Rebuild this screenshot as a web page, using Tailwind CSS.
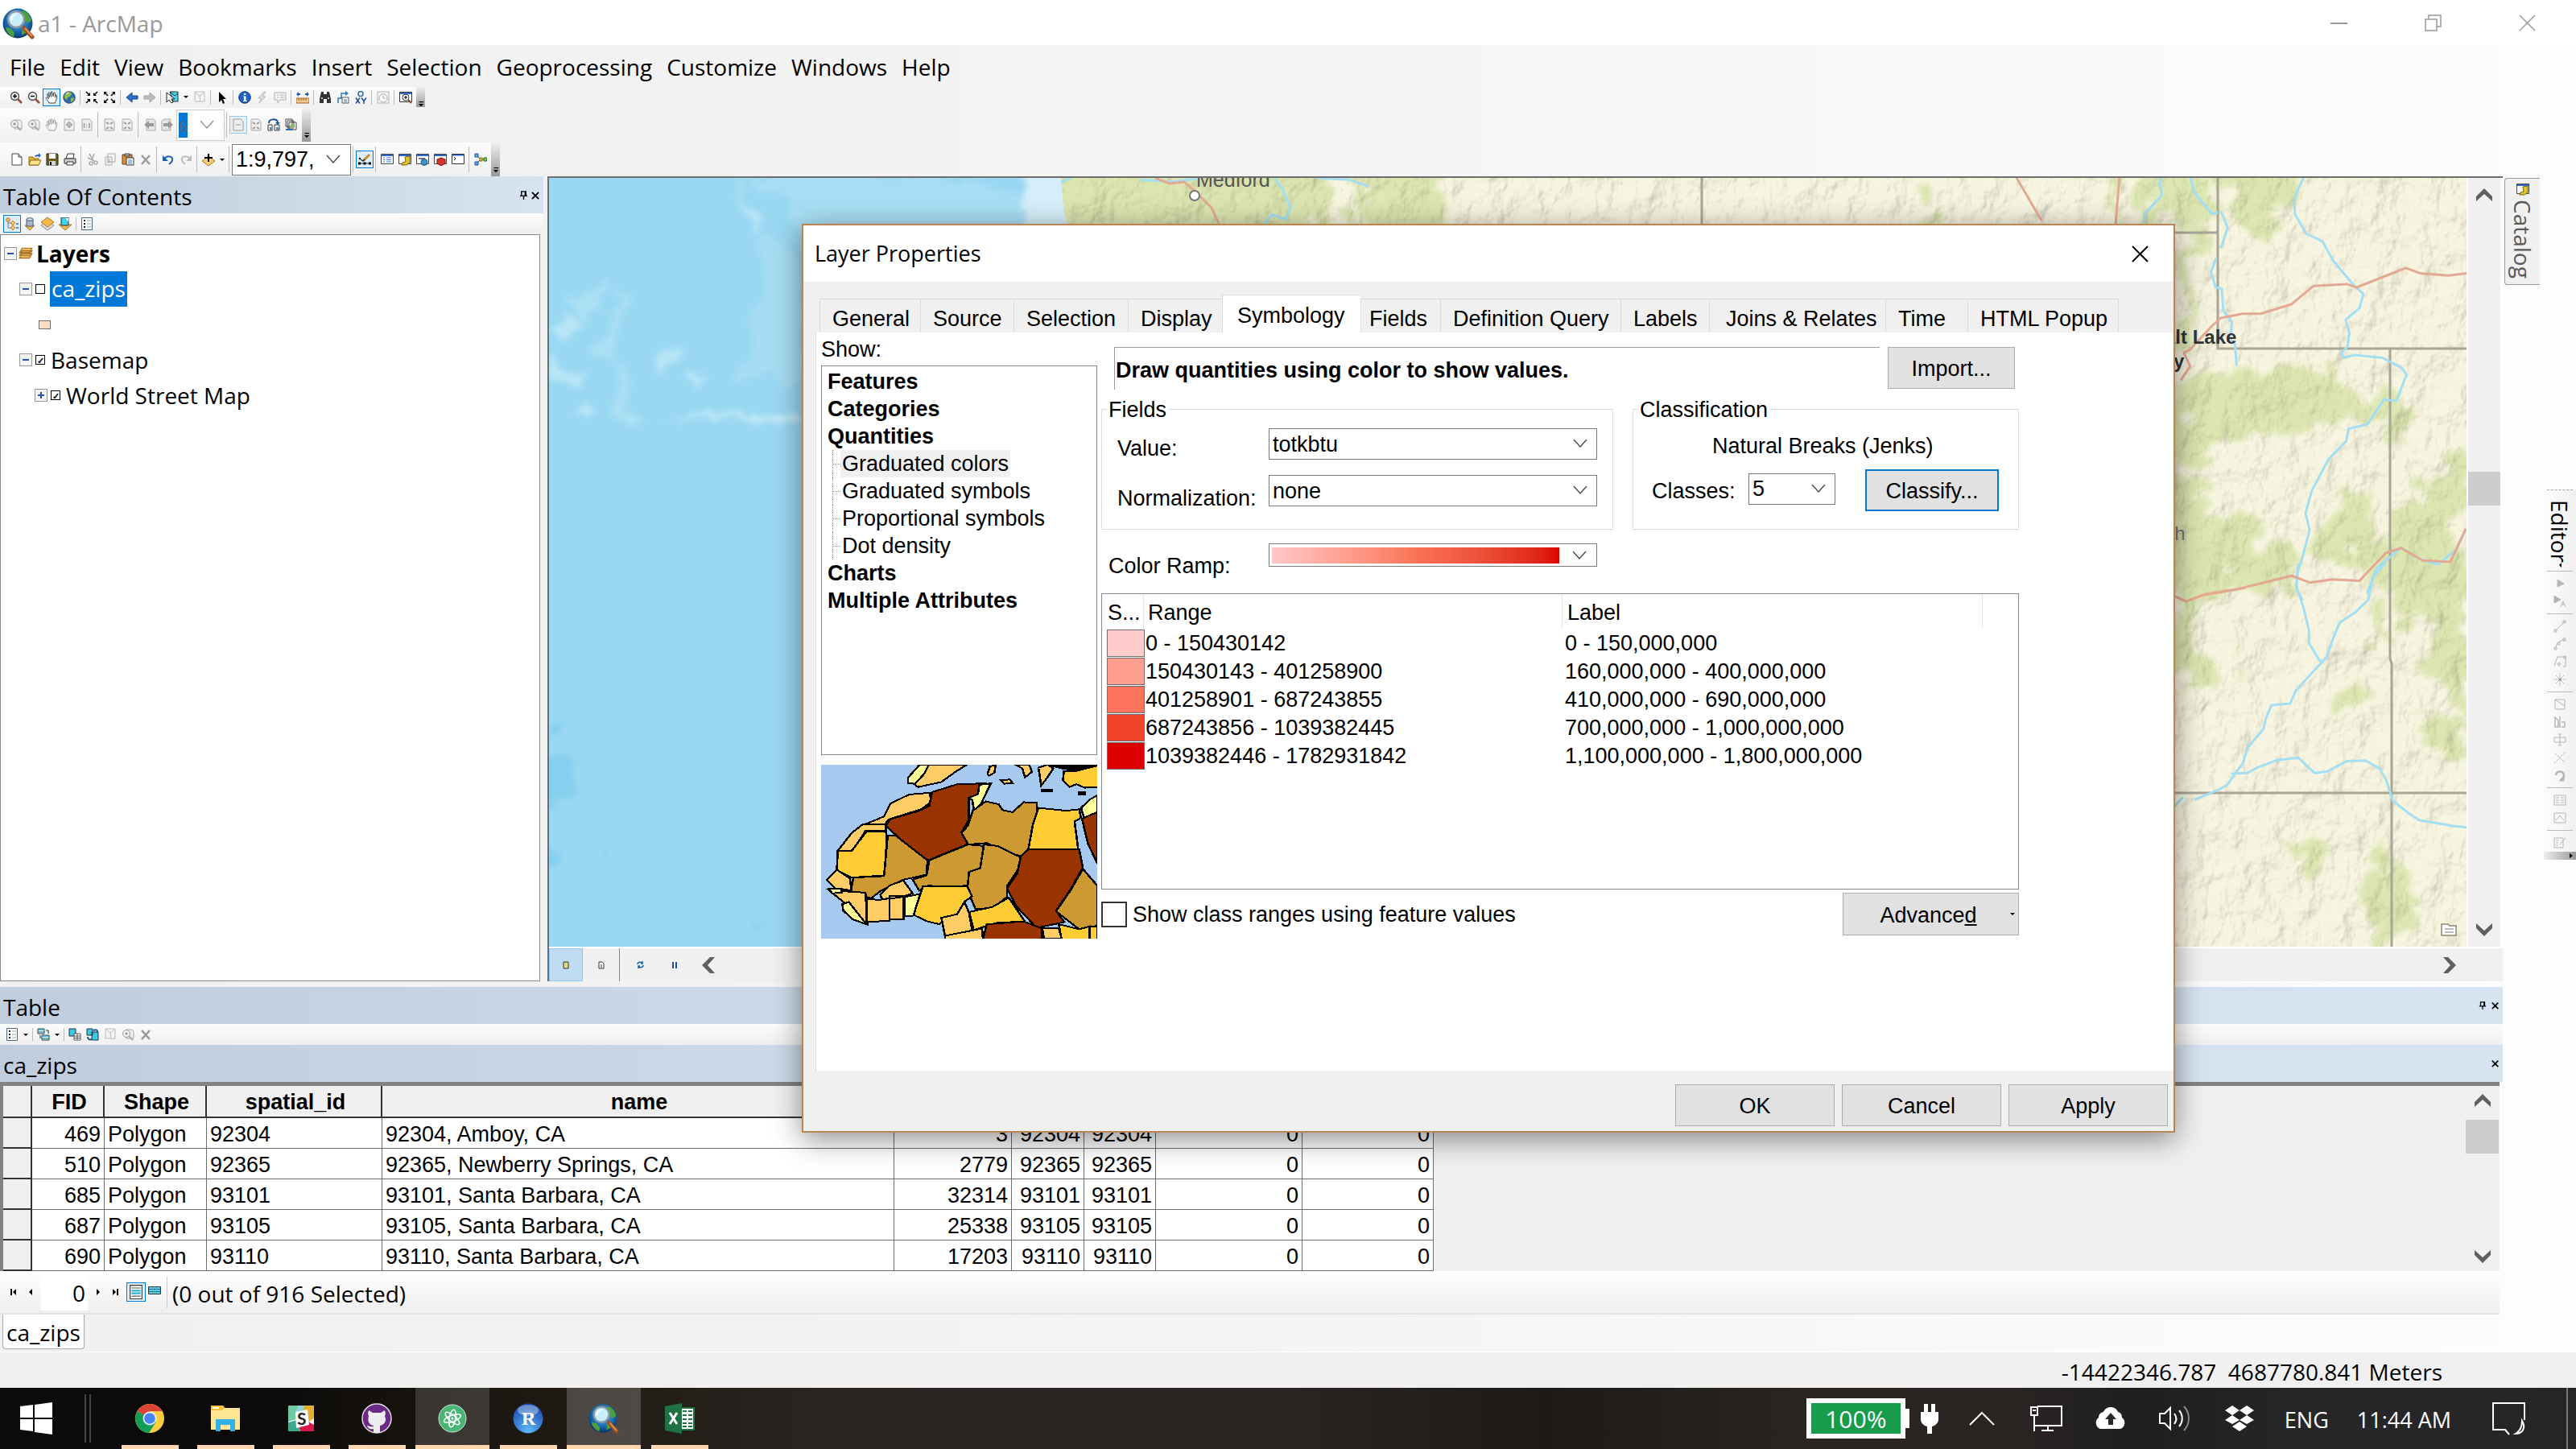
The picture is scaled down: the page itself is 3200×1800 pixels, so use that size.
<!DOCTYPE html>
<html lang="en">
<head>
<meta charset="utf-8">
<title>a1 - ArcMap</title>
<script src="https://cdn.jsdelivr.net/npm/@tailwindcss/browser@4"></script>
</head>
<body class="bg-[#f0f0f0] font-['Open_Sans','Noto_Sans',sans-serif] text-[28px] leading-9 text-black">

<!-- icon library -->
<svg class="absolute size-0" aria-hidden="true">
  <radialGradient id="gl" cx=".5" cy=".4" r=".6"><stop offset="0" stop-color="#5fc4ee"/><stop offset=".6" stop-color="#1c6fb5"/><stop offset="1" stop-color="#0b3468"/></radialGradient>
  <symbol id="app" viewBox="0 0 40 40"><circle cx="19" cy="20" r="18.500" fill="url(#gl)"/><path d="M25 4c6 2 10 7 11 13l-5 3-4-6-4-3zM4 25l6 1 5 6-1 5C9 35 5 31 4 25zM24 27l7-2-2 7-5 3z" fill="#4ba23a"/><circle cx="17" cy="15" r="10" fill="#c9eefb" stroke="#8b98a3" stroke-width="2.500"/><path d="M10 15c1-5 5-7 9-6-5 1-7 4-7 8z" fill="#fff"/><path d="M24 23l3 3" stroke="#777" stroke-width="4"/><path d="M27 26l10 11" stroke="#a04f1c" stroke-width="5" stroke-linecap="round"/><path d="M28 26l9 10" stroke="#e2935a" stroke-width="2"/></symbol>
  <symbol id="zin" viewBox="0 0 16 16"><circle cx="6.500" cy="6.500" r="5" fill="#eef3f7" stroke="#444" stroke-width="1.300"/><path d="M4 6.500h5M6.500 4v5" stroke="#000" stroke-width="1.500"/><path d="M10 10l5 5" stroke="#8f4b39" stroke-width="2.500"/></symbol>
  <symbol id="zout" viewBox="0 0 16 16"><circle cx="6.500" cy="6.500" r="5" fill="#eef3f7" stroke="#444" stroke-width="1.300"/><path d="M4 6.500h5" stroke="#000" stroke-width="1.500"/><path d="M10 10l5 5" stroke="#8f4b39" stroke-width="2.500"/></symbol>
  <symbol id="hand" viewBox="0 0 16 16"><path d="M5 15C4 12 1 10 1 8.500 2 7 4 9 4.500 10L2.500 4c1-1 2 0 3 4L4.500 2c1-1 2 0 3 5.500L7.500 1c1-1 2 0 2.300 6L11 2c1-.5 2 0 1.500 6l1-3c1 0 1.500 0 1 3-.5 4-2 5-2 7z" fill="#fff" stroke="#444"/></symbol>
  <symbol id="globe" viewBox="0 0 16 16"><circle cx="8" cy="8" r="7.300" fill="#2c6cb4" stroke="#1c3d66" stroke-width=".8"/><path d="M5 2l4-1 2 3-2 3-3 1-1 3-3-2 0-3zM10 9l4-1-1 4-3 2z" fill="#8cbc4c"/><path d="M4 4l3-2" stroke="#e8f2c8" stroke-width="1.500"/></symbol>
  <symbol id="in4" viewBox="0 0 16 16"><path d="M1 1l4 4M15 1l-4 4M1 15l4-4M15 15l-4-4" stroke="#000" stroke-width="1.500"/><path d="M6 2v4H2zM10 2v4h4zM6 14v-4H2zM10 14v-4h4z"/></symbol>
  <symbol id="out4" viewBox="0 0 16 16"><path d="M2 2l4 4M14 2l-4 4M2 14l4-4M14 14l-4-4" stroke="#000" stroke-width="1.500"/><path d="M1 5V1h4zM15 5V1h-4zM1 11v4h4zM15 11v4h-4z"/></symbol>
  <symbol id="back" viewBox="0 0 16 16"><path d="M1 8l7-6v4h7v4H8v4z" fill="#2f6fd0" stroke="#173f8a"/></symbol>
  <symbol id="fwd" viewBox="0 0 16 16"><path d="M15 8L8 2v4H1v4h7v4z" fill="#bdbdbd" stroke="#a5a5a5"/></symbol>
  <symbol id="self" viewBox="0 0 16 16"><path d="M5 1h10v12H9z" fill="#45d7ee" stroke="#333"/><path d="M5 1l6 5 4-3" stroke="#333" fill="none"/><path d="M1 2v12l3-3 3 4 2-1-2-4h4z" fill="#fff" stroke="#222"/></symbol>
  <symbol id="clr" viewBox="0 0 16 16"><path d="M2 1h12v12H2zM2 1l6 5 5-4M8 6l1 7" fill="#f4f4f4" stroke="#bbb"/></symbol>
  <symbol id="ptr" viewBox="0 0 16 16"><path d="M4 1v13l3-3 2 5 2-1-2-5h4z"/></symbol>
  <symbol id="info" viewBox="0 0 16 16"><circle cx="8" cy="8" r="7.300" fill="#1f62c4" stroke="#12397c"/><path d="M7 3h2.500v2H7zM6 6.500h3.500V12H11v1H6v-1h1V7.500H6z" fill="#fff"/></symbol>
  <symbol id="bolt" viewBox="0 0 16 16"><path d="M10 1L3 9h4l-3 6 8-8H8l4-6z" fill="#e3e3e3" stroke="#b5b5b5"/></symbol>
  <symbol id="pop" viewBox="0 0 16 16"><path d="M1 2h14v9H8l-3 4v-4H1zM4 5h2M4 8h2M8 5h5M8 8h5" fill="#f3f3f3" stroke="#b0b0b0"/></symbol>
  <symbol id="rule" viewBox="0 0 16 16"><path d="M0 4l3-3v2h2v2H3v2zM16 4l-3-3v2h-2v2h2v2z" fill="#2459b0"/><path d="M0 9h16v6H0z" fill="#f3c98b" stroke="#9b6a2b"/><path d="M3 9v3M6 9v3M9 9v3M12 9v3" stroke="#9b6a2b"/></symbol>
  <symbol id="bino" viewBox="0 0 16 16"><path d="M3 1h3v3h4V1h3l2 9v5h-5v-5H6v5H1v-5z" fill="#333"/><path d="M3 9h2M11 9h2" stroke="#bbb" stroke-width="2"/></symbol>
  <symbol id="route" viewBox="0 0 16 16"><path d="M2 15V9h4V3h5" fill="none" stroke="#2e78b5" stroke-width="1.500"/><path d="M11 0l4 3-4 3z" fill="#2e78b5"/><path d="M7 8h8v7H7z" fill="#fff" stroke="#555"/><path d="M9 11h4M9 13h4" stroke="#2e78b5"/></symbol>
  <symbol id="xy" viewBox="0 0 16 16"><circle cx="8" cy="3.500" r="3" fill="#fff" stroke="#2768a8" stroke-width="1.500"/><path d="M2 8.500l5 7M7 8.500l-5 7M9 8.500l3 4 3-4M12 12v4" stroke="#1c4f9a" stroke-width="1.500" fill="none"/></symbol>
  <symbol id="time" viewBox="0 0 16 16"><path d="M1 1h14v14H1z" fill="#f2f2f2" stroke="#b5b5b5"/><circle cx="8" cy="9" r="5" fill="#fafafa" stroke="#b0b0b0"/><path d="M8 6v3h3" fill="none" stroke="#aaa"/></symbol>
  <symbol id="view" viewBox="0 0 16 16"><path d="M.5 1.500h15v12H.5z" fill="#fff" stroke="#333"/><path d="M1 2h14v2H1z" fill="#3a6fd0"/><circle cx="8" cy="8" r="4" fill="#fff" stroke="#333"/><path d="M6 8h4M8 6v4" stroke="#000"/><path d="M11 11l4 4" stroke="#8f4b39" stroke-width="2"/></symbol>
  <symbol id="lz" viewBox="0 0 16 16"><path d="M6 2h7l2 2v9H6z" fill="#eee" stroke="#aaa"/><circle cx="6" cy="7" r="4.500" fill="#f2f2f2" stroke="#999"/><path d="M4 7h4M6 5v4" stroke="#888"/><path d="M9 10l5 5" stroke="#aaa" stroke-width="2"/></symbol>
  <symbol id="lp" viewBox="0 0 16 16"><path d="M2 1h9l3 3v11H2z" fill="#eee" stroke="#aaa"/><path d="M5 8h6M8 5v6M4 8l2-2v4zM12 8l-2-2v4zM8 4L6 6h4zM8 12l-2-2h4z" fill="#aaa" stroke="#aaa"/></symbol>
  <symbol id="l1" viewBox="0 0 16 16"><path d="M2 1h9l3 3v11H2z" fill="#eee" stroke="#aaa"/><path d="M4.500 6v6M11 6v6M7.500 7.500v1M7.500 10.500v1" stroke="#999" stroke-width="1.500"/></symbol>
  <symbol id="l4" viewBox="0 0 16 16"><path d="M2 1h9l3 3v11H2z" fill="#eee" stroke="#aaa"/><path d="M4 5l3 2M12 5l-3 2M4 13l3-2M12 13l-3-2" stroke="#999" stroke-width="2"/></symbol>
  <symbol id="la" viewBox="0 0 16 16"><path d="M4 1h8l3 2v12H4z" fill="#e6e6e6" stroke="#aaa"/><path d="M1 8l6-5v3h6v4H7v3z" fill="#999"/></symbol>
  <symbol id="ld" viewBox="0 0 16 16"><path d="M2 1h9l3 3v11H2z" fill="#eee" stroke="#999"/><path d="M5 8h6" stroke="#999"/></symbol>
  <symbol id="swap" viewBox="0 0 16 16"><path d="M2 6c0-6 10-6 11-1" fill="none" stroke="#1d4f91" stroke-width="2"/><path d="M10 5h6l-3 3z" fill="#1d4f91"/><path d="M1 8h5v7H1zM9 8h6v7H9z" fill="#fff" stroke="#333"/><path d="M3 11h2v3H3zM11 11h3v3h-3z" fill="#4a86c8"/></symbol>
  <symbol id="pages" viewBox="0 0 16 16"><path d="M1 1h8v9H1zM3 3h8v9H3zM5 5h9v9H5z" fill="#fff" stroke="#444"/><path d="M7 7h5v5H7z" fill="#7fc35a"/><path d="M1 14h9" stroke="#2c70c0" stroke-width="2"/></symbol>
  <symbol id="new" viewBox="0 0 16 16"><path d="M2 1h8l4 4v10H2z" fill="#fff" stroke="#444"/><path d="M10 1v4h4" fill="#bdd2ee" stroke="#444"/></symbol>
  <symbol id="open" viewBox="0 0 16 16"><path d="M1 5h5l1 2h6v8H1z" fill="#e3b52f" stroke="#8d6a12"/><path d="M3 9h13l-3 6H1z" fill="#ffe48a" stroke="#8d6a12"/><path d="M8 5c1-3 3-3 5-3V0l3 3-3 3V4" fill="#2c64b8"/></symbol>
  <symbol id="save" viewBox="0 0 16 16"><path d="M1 1h13l1 1v13H1z" fill="#6a6021" stroke="#26230c"/><path d="M4 1h8v6H4z" fill="#fff"/><path d="M4 10h8v5H4z" fill="#d5d5d5"/><path d="M5 11h2v4H5z"/></symbol>
  <symbol id="print" viewBox="0 0 16 16"><path d="M5 1h8l-1 6H3z" fill="#fff" stroke="#333"/><path d="M1 7h14v6H1z" fill="#c9ccd2" stroke="#333"/><path d="M4 11h8v4H4z" fill="#fff" stroke="#333"/></symbol>
  <symbol id="cut" viewBox="0 0 16 16"><path d="M4 1l6 10M8 9L2 6M10 1L7 9" stroke="#aaa" stroke-width="1.500"/><circle cx="12" cy="12" r="2" fill="none" stroke="#aaa" stroke-width="1.500"/><circle cx="6" cy="13" r="2" fill="none" stroke="#aaa" stroke-width="1.500"/></symbol>
  <symbol id="copy" viewBox="0 0 16 16"><path d="M5 1h9v10H5zM2 5h8v10H2zM4 8h4M4 10h4M4 12h4" fill="#f6f6f6" stroke="#aaa"/></symbol>
  <symbol id="paste" viewBox="0 0 16 16"><path d="M1 2h12v12H1z" fill="#d89038" stroke="#6d4312"/><path d="M4 1h6v3H4z" fill="#aaa" stroke="#444"/><path d="M6 6h9v9H6z" fill="#fff" stroke="#333"/><path d="M8 9h5M8 11h5M8 13h5" stroke="#4a78b8"/></symbol>
  <symbol id="del" viewBox="0 0 16 16"><path d="M3 3l10 11M13 3L3 14" stroke="#999" stroke-width="2.500"/></symbol>
  <symbol id="undo" viewBox="0 0 16 16"><path d="M3 7c5-5 11-2 10 2-.5 3-3 4-4 5" fill="none" stroke="#1d5fa8" stroke-width="2"/><path d="M1 3v7h7z" fill="#1d5fa8"/></symbol>
  <symbol id="redo" viewBox="0 0 16 16"><path d="M13 7C8 2 2 5 3 9c.5 3 3 4 4 5" fill="none" stroke="#bbb" stroke-width="2"/><path d="M15 3v7H8z" fill="#bbb"/></symbol>
  <symbol id="add" viewBox="0 0 16 16"><path d="M8 4l8 6-8 6-8-6z" fill="#f5cf6c" stroke="#a8792a"/><path d="M8 1v10M3 6h10" stroke="#000" stroke-width="2"/></symbol>
  <symbol id="edit" viewBox="0 0 16 16"><path d="M1 13h14" stroke="#222"/><path d="M0 11.500h3v3H0zM6.500 11.500h3v3h-3zM13 11.500h3v3h-3zM1 6h2v2H1z"/><path d="M7 9l7-7" fill="none" stroke="#c98e2a" stroke-width="3"/><path d="M3 8l3 2 2-2" fill="none" stroke="#222" stroke-width="1.500"/></symbol>
  <symbol id="wtoc" viewBox="0 0 16 16"><path d="M.5 1.500h15v12H.5z" fill="#fff" stroke="#444"/><path d="M1 2h14v2H1z" fill="#2f68cc"/><path d="M3 6h2M3 8.500h2M3 11h2M7 6h6M7 8.500h6M7 11h6" stroke="#3a76c8"/></symbol>
  <symbol id="wcat" viewBox="0 0 16 16"><path d="M.5 1.500h15v12H.5z" fill="#fff" stroke="#444"/><path d="M1 2h14v2H1z" fill="#2f68cc"/><path d="M8 5l6-1v8l-4 3H4l1-3 4-1z" fill="#e2c526" stroke="#75640c"/></symbol>
  <symbol id="wsrch" viewBox="0 0 16 16"><path d="M.5 1.500h15v12H.5z" fill="#fff" stroke="#444"/><path d="M1 2h14v2H1z" fill="#2f68cc"/><path d="M3 7h8" stroke="#777" stroke-width="2"/><circle cx="10" cy="11.500" r="4" fill="#3b94c8" stroke="#23577d"/></symbol>
  <symbol id="wtool" viewBox="0 0 16 16"><path d="M.5 1.500h15v12H.5z" fill="#fff" stroke="#444"/><path d="M1 2h14v2H1z" fill="#2f68cc"/><path d="M4 8l5-2 5 2v5l-5 3-5-3z" fill="#d6342a" stroke="#7c130e"/></symbol>
  <symbol id="wpy" viewBox="0 0 16 16"><path d="M.5 1.500h15v12H.5z" fill="#fff" stroke="#333"/><path d="M1 2h14v1.500H1z" fill="#2f68cc"/><path d="M3 5l2 2-2 2" fill="none" stroke="#000"/></symbol>
  <symbol id="model" viewBox="0 0 16 16"><path d="M3 3l5 5h5M3 13l5-5" fill="none" stroke="#444"/><path d="M1 1h4v4H1zM1 11h4v4H1z" fill="#5fa8e8" stroke="#1c4f9a"/><path d="M7 6h3v4H7z" fill="#f2cf3d" stroke="#7a6410"/><path d="M12 6h4v4h-4z" fill="#7fc35a" stroke="#2f6a1a"/></symbol>
  <symbol id="tord" viewBox="0 0 16 16"><path d="M3 5v8h5M3 7h4" fill="none" stroke="#777"/><circle cx="3" cy="3" r="2.300" fill="#f1c15c" stroke="#a8792a"/><path d="M9 4l3 3-3 3-3-3zM9 10l3 3-3 3-3-3z" fill="#f1c15c" stroke="#a8792a" stroke-width=".8"/><path d="M13 8h3M13 13h3" stroke="#2f68cc" stroke-width="1.500"/></symbol>
  <symbol id="tsrc" viewBox="0 0 16 16"><path d="M2 10h12l-6 6z" fill="#f1b84e" stroke="#a8792a"/><path d="M4 2h8v9H4z" fill="#a9b8d2" stroke="#4c5a78"/><ellipse cx="8" cy="2.500" rx="4" ry="1.800" fill="#dde5f2" stroke="#4c5a78"/></symbol>
  <symbol id="tvis" viewBox="0 0 16 16"><path d="M8 4l8 6-8 6-8-6z" fill="#ddd" stroke="#888"/><path d="M8 0l8 6-8 6-8-6z" fill="#f1b84e" stroke="#a8792a"/></symbol>
  <symbol id="tsel" viewBox="0 0 16 16"><path d="M0 9h16l-8 7z" fill="#f1b84e" stroke="#a8792a"/><path d="M3 0h9v10H3z" fill="#3fd2ec" stroke="#333"/><path d="M8 1h4v4z" fill="#fff"/></symbol>
  <symbol id="opts" viewBox="0 0 16 16"><path d="M1.500.5h13v15h-13z" fill="#fff" stroke="#4c6484"/><path d="M4 4h2M4 8h2M4 12h2" stroke="#222" stroke-width="2"/><path d="M8 4h5M8 8h5M8 12h5" stroke="#8aa"/></symbol>
  <symbol id="rel" viewBox="0 0 16 16"><path d="M1 1h8v6H1zM6 9h9v6H6z" fill="#fff" stroke="#333"/><path d="M1 2h8M1 5h8M6 10h9M6 13h9" stroke="#2a9db8" stroke-width="1.500"/><path d="M11 3h3v4M4 9v4" fill="none" stroke="#222"/></symbol>
  <symbol id="tse1" viewBox="0 0 16 16"><path d="M1 1h8v9H1z" fill="#35cbe8" stroke="#333"/><path d="M7 7h8v8H7zM7 10h8M7 12.500h8M11 7v8" fill="#fff" stroke="#555"/></symbol>
  <symbol id="tse2" viewBox="0 0 16 16"><path d="M1 1h7v8H1zM7 5h8v10H7z" fill="#35cbe8" stroke="#333"/><path d="M9 3c4-2 5 0 5 2M2 11c0 3 2 4 5 3" fill="none" stroke="#174f9a" stroke-width="2"/></symbol>
  <symbol id="all" viewBox="0 0 16 16"><path d="M1.500.5h13v15h-13z" fill="#fff" stroke="#333"/><path d="M3 3.500h10M3 12.500h10" stroke="#555"/><path d="M3 6.500h10M3 9.500h10" stroke="#2fb2cc" stroke-width="2"/></symbol>
  <symbol id="selr" viewBox="0 0 16 16"><path d="M.5 1.500h15v9H.5z" fill="#5cd0e4" stroke="#333"/><path d="M1 4.500h14M1 7.500h14" stroke="#256f82"/></symbol>
  <symbol id="pin" viewBox="0 0 12 12"><path d="M3 1h6v6H3zM8 1v6M1 7h10M6 7v5" fill="none" stroke="#000" stroke-width="1.500"/></symbol>
  <symbol id="x" viewBox="0 0 12 12"><path d="M1 2l9 9M10 2l-9 9" stroke="#000" stroke-width="2"/></symbol>
  <symbol id="chev" viewBox="0 0 18 12"><path d="M1 1l8 9 8-9" fill="none" stroke="#444" stroke-width="1.300"/></symbol>
  <symbol id="arr" viewBox="0 0 20 16"><path d="M0 10L10 0l10 10v6L10 7 0 16z" fill="#606060"/></symbol>
  <symbol id="cap" viewBox="0 0 10 10"><path d="M2 2h7" stroke="#000" stroke-width="1.500"/><path d="M1 5h8l-4 4z"/></symbol>
</svg>

<div class="flex min-h-screen w-full flex-col bg-linear-to-r from-[#f0f0f0] via-[#f4f4f4] to-[#fdfdfd]">

  <!-- title bar -->
  <header class="flex h-14 items-center bg-white pt-px pl-[3px] text-[#999]">
    <svg class="size-[40px]"><use href="#app"/></svg>
    <h1 class="ml-1 flex-1">a1 - ArcMap</h1>
    <div class="flex items-center pr-[50px]">
      <button aria-label="Minimize" class="mr-24"><svg class="h-5 w-[21px]" viewBox="0 0 21 20"><path d="M0 10h21" stroke="#999" stroke-width="2"/></svg></button>
      <button aria-label="Restore" class="mr-24"><svg class="size-[21px]" viewBox="0 0 21 21" fill="none" stroke="#999" stroke-width="1.500"><path d="M1 6h14v14H1zM5 6V1h15v14h-5"/></svg></button>
      <button aria-label="Close"><svg class="size-[21px]" viewBox="0 0 21 21" stroke="#999" stroke-width="1.500"><path d="M1 1l19 19M20 1L1 20"/></svg></button>
    </div>
  </header>

  <nav class="flex h-[52px] items-center gap-[18px] pt-px pl-3" aria-label="Menu">
    <button>File</button><button>Edit</button><button>View</button><button>Bookmarks</button><button>Insert</button><button>Selection</button><button>Geoprocessing</button><button>Customize</button><button>Windows</button><button>Help</button>
  </nav>

  <!-- toolbars -->
  <div class="flex h-[25px]">
    <div role="toolbar" aria-label="Tools" class="flex items-center bg-linear-to-b from-[#fcfcfc] to-[#f0f0f0] pl-[9px] [&_button]:flex [&_button]:h-[22px] [&_button]:w-[22px] [&_button]:items-center [&_button]:justify-center [&_svg]:size-4 [&>i]:mx-[2px] [&>i]:h-[18px] [&>i]:w-[2px] [&>i]:border-l [&>i]:border-[#bbb]">
      <button aria-label="Zoom In"><svg><use href="#zin"/></svg></button><button aria-label="Zoom Out"><svg><use href="#zout"/></svg></button><button aria-label="Pan" class="border border-[#0078d7] bg-[#ddeefa]"><svg><use href="#hand"/></svg></button><button aria-label="Full Extent"><svg><use href="#globe"/></svg></button><i></i>
      <button aria-label="Fixed Zoom In"><svg><use href="#in4"/></svg></button><button aria-label="Fixed Zoom Out"><svg><use href="#out4"/></svg></button><i></i>
      <button aria-label="Back"><svg><use href="#back"/></svg></button><button aria-label="Forward"><svg><use href="#fwd"/></svg></button><i></i>
      <button aria-label="Select Features"><svg><use href="#self"/></svg></button><b class="mx-[3px] border-x-3 border-t-3 border-x-transparent border-t-black"></b><button aria-label="Clear Selection"><svg><use href="#clr"/></svg></button><i></i>
      <button aria-label="Select Elements"><svg><use href="#ptr"/></svg></button><i></i>
      <button aria-label="Identify"><svg><use href="#info"/></svg></button><button aria-label="Hyperlink"><svg><use href="#bolt"/></svg></button><button aria-label="HTML Popup"><svg><use href="#pop"/></svg></button><i></i>
      <button aria-label="Measure"><svg><use href="#rule"/></svg></button><i></i>
      <button aria-label="Find"><svg><use href="#bino"/></svg></button><button aria-label="Find Route"><svg><use href="#route"/></svg></button><button aria-label="Go To XY"><svg><use href="#xy"/></svg></button><i></i>
      <button aria-label="Time Slider"><svg><use href="#time"/></svg></button><i></i>
      <button aria-label="Viewer Window"><svg><use href="#view"/></svg></button>
      <span class="ml-[2px] flex h-full w-[11px] items-end justify-center self-end bg-linear-to-b from-[#f0f0f0] to-[#999]"><svg class="size-2!"><use href="#cap"/></svg></span>
    </div>
  </div>
  <div class="flex h-11 py-px">
    <div role="toolbar" aria-label="Layout" class="flex items-center bg-linear-to-b from-[#fcfcfc] to-[#f0f0f0] pl-[9px] [&_button]:flex [&_button]:h-[22px] [&_button]:w-[22px] [&_button]:items-center [&_button]:justify-center [&_svg]:size-4 [&>i]:mx-[2px] [&>i]:h-8 [&>i]:w-[2px] [&>i]:border-l [&>i]:border-[#bbb]">
      <button aria-label="Zoom In Page"><svg><use href="#lz"/></svg></button><button aria-label="Zoom Out Page"><svg><use href="#lz"/></svg></button><button aria-label="Pan Page"><svg class="opacity-50"><use href="#hand"/></svg></button><button aria-label="Zoom Whole Page"><svg><use href="#lp"/></svg></button><button aria-label="Zoom to 100%"><svg><use href="#l1"/></svg></button><i></i>
      <button aria-label="Fixed Zoom In Page"><svg><use href="#l4"/></svg></button><button aria-label="Fixed Zoom Out Page"><svg><use href="#l4"/></svg></button><i></i>
      <button aria-label="Previous Extent"><svg><use href="#la"/></svg></button><button aria-label="Next Extent"><svg class="-scale-x-100"><use href="#la"/></svg></button>
      <span class="flex h-[39px] w-[60px] items-center justify-between border border-[#ccc] bg-white pr-3 pl-[2px]"><b class="h-[31px] w-[11px] bg-[#0078d7] text-[18px] leading-[34px] font-normal text-[#666]">6</b><svg class="h-3! w-[18px]! opacity-60"><use href="#chev"/></svg></span><i></i>
      <button aria-label="Draft Mode" class="border border-[#9ac7ea] bg-[#e6eef5]"><svg><use href="#ld"/></svg></button><button aria-label="Focus Data Frame"><svg><use href="#l4"/></svg></button><button aria-label="Change Layout"><svg><use href="#swap"/></svg></button><button aria-label="Data Driven Pages"><svg><use href="#pages"/></svg></button>
      <span class="ml-[2px] flex h-full w-[11px] items-end justify-center bg-linear-to-b from-[#f0f0f0] to-[#999] pb-1"><svg class="size-2!"><use href="#cap"/></svg></span>
    </div>
  </div>
  <div class="flex h-[42px]">
    <div role="toolbar" aria-label="Standard" class="flex items-center bg-linear-to-b from-[#fcfcfc] to-[#f0f0f0] pl-[10px] [&_button]:flex [&_button]:h-[22px] [&_button]:w-[22px] [&_button]:items-center [&_button]:justify-center [&_svg]:size-4 [&>i]:mx-[2px] [&>i]:h-8 [&>i]:w-[2px] [&>i]:border-l [&>i]:border-[#bbb]">
      <button aria-label="New"><svg><use href="#new"/></svg></button><button aria-label="Open"><svg><use href="#open"/></svg></button><button aria-label="Save"><svg><use href="#save"/></svg></button><button aria-label="Print"><svg><use href="#print"/></svg></button><i></i>
      <button aria-label="Cut"><svg><use href="#cut"/></svg></button><button aria-label="Copy"><svg><use href="#copy"/></svg></button><button aria-label="Paste"><svg><use href="#paste"/></svg></button><button aria-label="Delete"><svg><use href="#del"/></svg></button><i></i>
      <button aria-label="Undo"><svg><use href="#undo"/></svg></button><button aria-label="Redo"><svg><use href="#redo"/></svg></button><i></i>
      <button aria-label="Add Data"><svg><use href="#add"/></svg></button><b class="mx-[3px] border-x-3 border-t-3 border-x-transparent border-t-black"></b><i></i>
      <span class="flex h-[39px] w-[148px] items-center border border-[#777] bg-white pr-3"><input aria-label="Map Scale" value="1:9,797," class="w-0 flex-1 pl-1 font-['Liberation_Sans',sans-serif] text-[27px] outline-none"><svg class="h-3! w-[18px]!"><use href="#chev"/></svg></span><i></i>
      <button aria-label="Editor Toolbar" class="border border-[#0078d7] bg-[#ddeefa]"><svg><use href="#edit"/></svg></button><i></i>
      <button aria-label="Table Of Contents"><svg><use href="#wtoc"/></svg></button><button aria-label="Catalog"><svg><use href="#wcat"/></svg></button><button aria-label="Search"><svg><use href="#wsrch"/></svg></button><button aria-label="ArcToolbox"><svg><use href="#wtool"/></svg></button><button aria-label="Python"><svg><use href="#wpy"/></svg></button><i></i>
      <button aria-label="ModelBuilder"><svg><use href="#model"/></svg></button>
      <span class="ml-[2px] flex h-full w-[11px] items-end justify-center bg-linear-to-b from-[#f0f0f0] to-[#999] pb-1"><svg class="size-2!"><use href="#cap"/></svg></span>
    </div>
  </div>

  <main class="flex flex-1">
    <div class="flex min-w-0 flex-1 flex-col">
      <div class="flex flex-1 gap-[5px]">

        <!-- table of contents -->
        <aside class="flex w-[675px] flex-col">
          <div class="flex h-[46px] items-center bg-linear-to-r from-[#bfcddc] to-[#d6e3f0] pr-1 pl-1">
            <h2 class="flex-1 pt-[3px]">Table Of Contents</h2>
            <button aria-label="Auto Hide" class="mr-1"><svg class="size-[11px]"><use href="#pin"/></svg></button>
            <button aria-label="Close"><svg class="size-[11px]"><use href="#x"/></svg></button>
          </div>
          <div role="toolbar" aria-label="List By" class="flex h-[26px] items-center bg-linear-to-b from-[#fcfcfc] to-[#efefef] pl-1 [&_button]:flex [&_button]:h-[22px] [&_button]:w-[22px] [&_button]:items-center [&_button]:justify-center [&_svg]:size-4">
            <button aria-label="List By Drawing Order" class="border border-[#0078d7] bg-[#ddeefa]"><svg><use href="#tord"/></svg></button><button aria-label="List By Source"><svg><use href="#tsrc"/></svg></button><button aria-label="List By Visibility"><svg><use href="#tvis"/></svg></button><button aria-label="List By Selection"><svg><use href="#tsel"/></svg></button><i class="mx-[2px] h-4 border-l border-[#bbb]"></i><button aria-label="Options"><svg><use href="#opts"/></svg></button>
          </div>
          <ul class="mr-1 flex-1 border border-[#828790] bg-white pt-px [&_button]:size-4 [&_button]:border [&_button]:border-[#999] [&_button]:bg-[#f4f4f4] [&_button>svg]:size-[14px] [&_input]:ml-1 [&_input]:grid [&_input]:size-3 [&_input]:appearance-none [&_input]:place-items-center [&_input]:border [&_input]:border-black [&_input]:bg-white [&_li]:flex [&_li]:h-11 [&_li]:items-center">
            <li class="pl-1"><button aria-label="Collapse"><svg viewBox="0 0 14 14"><path d="M3 7h8" stroke="#2b4fa8" stroke-width="2"/></svg></button><svg class="ml-[2px] size-[18px]" viewBox="0 0 16 16"><path d="M4 8h11l-3 5H1zM4 5h11l-3 5H1zM4 2h11l-3 5H1z" fill="#f1b95a" stroke="#9c6c22"/></svg><strong class="ml-1">Layers</strong></li>
            <li class="pl-[23px]"><button aria-label="Collapse"><svg viewBox="0 0 14 14"><path d="M3 7h8" stroke="#2b4fa8" stroke-width="2"/></svg></button><input type="checkbox" id="ly1"><label for="ly1" class="ml-[6px] h-11 bg-[#0078d7] px-[2px] leading-[42px] text-white">ca_zips</label></li>
            <li class="pl-[47px]"><span class="h-[11px] w-[15px] border border-[#6e6e6e] bg-[#fbdcc4]"></span></li>
            <li class="pl-[23px]"><button aria-label="Collapse"><svg viewBox="0 0 14 14"><path d="M3 7h8" stroke="#2b4fa8" stroke-width="2"/></svg></button><input type="checkbox" id="ly2" checked class="before:text-[11px] before:leading-none before:font-bold before:content-['✓']"><label for="ly2" class="ml-[7px]">Basemap</label></li>
            <li class="pl-[42px]"><button aria-label="Expand"><svg viewBox="0 0 14 14"><path d="M3 7h8M7 3v8" stroke="#2b4fa8" stroke-width="2"/></svg></button><input type="checkbox" id="ly3" checked class="before:text-[11px] before:leading-none before:font-bold before:content-['✓']"><label for="ly3" class="ml-[7px]">World Street Map</label></li>
          </ul>
        </aside>

        <!-- map view -->
        <section class="flex min-w-0 flex-1 flex-col border-t-2 border-l-2 border-[#6d6d6d] bg-[#f0f0f0]" aria-label="Map">
          <div class="flex flex-1">
            <div class="relative flex-1 overflow-hidden bg-[#9ad8f2]">
              <svg class="absolute inset-0 size-full" viewBox="682 221 2382 955" preserveAspectRatio="xMinYMin slice">
                <defs>
                  <filter id="rough" x="-5%" y="-5%" width="110%" height="110%"><feTurbulence type="fractalNoise" baseFrequency=".022" numOctaves="5" seed="4"/><feDisplacementMap in="SourceGraphic" scale="90" xChannelSelector="R" yChannelSelector="G"/><feGaussianBlur stdDeviation="3"/></filter>
                  <filter id="sea" x="-10%" y="-10%" width="120%" height="120%"><feTurbulence type="fractalNoise" baseFrequency=".03" numOctaves="4" seed="9"/><feDisplacementMap in="SourceGraphic" scale="30" xChannelSelector="R" yChannelSelector="G"/><feGaussianBlur stdDeviation="3"/></filter>
                  <filter id="relief" x="0" y="0" width="100%" height="100%"><feTurbulence type="fractalNoise" baseFrequency=".03 .022" numOctaves="4" seed="12"/><feColorMatrix values="0 0 0 0 0  0 0 0 0 0  0 0 0 0 0  1 0 0 0 0"/><feDiffuseLighting surfaceScale="14" diffuseConstant="1.150" lighting-color="#fffbe6"><feDistantLight azimuth="225" elevation="60"/></feDiffuseLighting></filter>
                  <clipPath id="land"><path d="M1318 219h1750v960H2600V290H1330l-8-24z"/></clipPath>
                </defs>
                <path d="M920 219h260l60 20 80 0 10 70H1000l-20-60z" fill="#a8def4" filter="url(#sea)"/>
                <path d="M1272 200h80v100h-80z" fill="#d5eef9" filter="url(#sea)"/>
                <g filter="url(#sea)"><g transform="translate(680 200) scale(.3333 .6505)">
                  <path d="M800 130l150 60v230l-60 20-40-30-140 5 60-50-20-60 60-60z" fill="#a7ddf3"/>
                  <path d="M70 265l110-15 40-20-15 50-65 30-50-20zM145 365l80-40 40-80 20 5-35 110 50 50 0 50-10 25 60 15-60 12-50-15 5-40 30-50-30-40z" fill="#abe0f4"/>
                  <path d="M0 315l80-12 50 15-80 15zM0 375l60 20 80 10-30 25-110-5zM390 385l60-22 60 10-100 25zM510 400l90 20-50 15zM100 490l50-28 50 35zM700 30l50 60 40 10-20 35-30-40z" fill="#b8e5f6"/>
                  <path d="M430 488l200-6 320-6v18z" fill="#c2e8f7"/>
                  <path d="M0 1070l80 5-60 20zM0 1130l120 20-10 50-60 20-30 30-30-20zM0 1300l60 20-20 30-40-5zM90 1380l60 5-30 8zM80 1430l20 10-5 20zM740 1450l70 5-40 10zM210 1320l25 5-20 8z" fill="#86cfee"/>
                </g></g>
                <path d="M1318 219h1750v960H2600V290H1330l-8-24z" fill="#f5f2dc"/>
                <g clip-path="url(#land)">
                  <g fill="#dbe6b4" filter="url(#rough)">
                    <path d="M1290 190h350v130h-340zM1680 210h100v80h-100zM1740 200h55v100h-55zM2390 250h30v40h-30z"/>
                    <path d="M2620 210h20v80h-15zM2670 210h80v60l-50 20-20-30zM2705 290l20 0 0 120-20 20zM2760 200h80l0 60-30 30-30-20z"/>
                    <path d="M2700 490l60-30 60 10 60-20 60 30 40 20 20 20-20 20-60-20-70 10-50 20-50 0-30 20 20 60 60 30 50 50-10 30-50-10-60 0-20 60-30 10z"/>
                    <path d="M2700 600h40v120l-20 40 20 80-40 10zM2880 640l60-20 20 50 50-80 50-10v180h-60l-50-40-60-30-30 10z"/>
                    <path d="M2990 730h80v170l-30-30-30-50zM2880 860l50-20 20 20-20 30-40 10zM2950 750l20 20-10 40-10-20zM3010 900l50-10 10 50-50 0zM2780 820l15 5-5 30-10-10z"/>
                    <path d="M2830 1040l30 5 30 30-10 20-20-10zM2950 1050l20-10 20 50 20 50-30 30-45 18z"/>
                  </g>
                  <path d="M1318 219h1750v960H2600V290H1330z" filter="url(#relief)" class="opacity-25 mix-blend-multiply"/>
                </g>
                <g fill="none" stroke="#a9a698" stroke-width="3">
                  <path d="M2114 219v70M2755 219v214h312M2700 289h55M2969 433v385l2 6v355M2700 985h368"/>
                </g>
                <g fill="none" stroke="#a3dff3" stroke-width="3" stroke-linejoin="round">
                  <g transform="translate(2600 200) scale(.3827 .3444)">
                    <path vector-effect="non-scaling-stroke" d="M685 55l-30 75v60l37 72 53 28 35 70 60 80 38 40-13 50-45 43 12 47-6 50-18 20 4 20 38-10 90 10 60 35 18 25-33 95-40-5-55 90-60 15-8 45-57 65-55 115-20 80 13 60-23 100-15 50-5 60 20 45M215 55l8 70-55 65v40M315 55l15 60 55 75 20-5M415 180l22 60-22 75M400 350l-17 50 15 55 20 5 5 80 28 40-5 60 15 20 5 80M1210 1330l-30 70-60 55-60-20-60-40-80 75-30 90"/>
                  </g>
                  <g transform="translate(2700 700) scale(.3333 .3954)">
                    <path vector-effect="non-scaling-stroke" d="M465 0l-8 70 28 70 20 70 0 40 43 60M790 0l-45 40-20 75-50 40-55 30-25 50-25 60-50 45-65 60-20 40-70 5-20 40-10 35-60 60-15 45-60 70-30 15-90 32M215 660l60-2 40-18 70-22 80-8 60 48 50-5 70-32 70-2 55 26 25 40 22 60 60 40 40 22 60 8 70 10 50 4M0 765l35-30"/>
                  </g>
                  <g transform="translate(1200 200) scale(.3333)"><path vector-effect="non-scaling-stroke" d="M355 80l40-20M650 70l120 8 90-12M1150 65l30 40 30 70-20 42-50-18-30 38M1310 64l120 6 70 25"/></g>
                </g>
                <g fill="none" stroke="#e4a993" stroke-width="3" stroke-linejoin="round">
                  <path d="M1435 221l18 7 18-2 14 12 20 20 10 22M2504 219l32 55M2633 219l-5 60"/>
                  <g transform="translate(2600 200) scale(.3827 .3444)">
                    <path vector-effect="non-scaling-stroke" d="M1215 405l-60 8-90-7-50-20-80 35-80 35-30-12-110 7-70 65-100 35-60 0-70 15-30 30-70 85-20 10 20 50-30 50M345 1568l110-20 110-30 80-22 60 25 70-12 90 5 85-100 50-18 70 45 90 5 50-120"/>
                  </g>
                  <path d="M2702 741l14 6 24-9 50-8"/>
                </g>
                <circle cx="1484" cy="243" r="6" fill="#fff" stroke="#777" stroke-width="2"/>
                <g font-family="Liberation Sans, sans-serif"><text x="1486" y="232" font-size="25" fill="#555">Medford</text><text x="2673" y="427" font-size="24" font-weight="bold" fill="#333">Salt Lake</text><text x="2668" y="457" font-size="24" font-weight="bold" fill="#333">City</text><text x="2664" y="671" font-size="24" fill="#777">Utah</text></g>
                <path d="M3033 1148h8l2 2h8v12h-18z" fill="#fff" stroke="#8a8872" stroke-width="1.500"/><path d="M3037 1154h11M3037 1158h11" stroke="#777"/>
              </svg>
            </div>
            <div class="flex w-[45px] flex-col items-center border-r-3 border-l-2 border-white bg-[#f0f0f0] py-[13px]">
              <button aria-label="Scroll Up"><svg class="h-4 w-5"><use href="#arr"/></svg></button>
              <span class="mt-[336px] h-[42px] w-full bg-[#cdcdcd]"></span>
              <button aria-label="Scroll Down" class="mt-auto rotate-180"><svg class="h-4 w-5"><use href="#arr"/></svg></button>
            </div>
          </div>
          <div class="flex h-[43px] items-center border-t-2 border-white">
            <button aria-label="Data View" class="grid h-full w-[42px] place-items-center border border-[#90c8f6] bg-[#bfdcf4]"><svg class="h-[10px] w-2" viewBox="0 0 8 10"><path d="M1 1h6v8H1z" fill="#dbe07a" stroke="#333"/></svg></button>
            <button aria-label="Layout View" class="grid h-full w-[46px] place-items-center border-r border-[#888]"><svg class="h-[10px] w-2" viewBox="0 0 8 10"><path d="M1 1h4l2 2v6H1zM3 5h2M3 7h2" fill="#fff" stroke="#333"/></svg></button>
            <button aria-label="Refresh" class="ml-[21px]"><svg class="size-[9px]" viewBox="0 0 9 9" fill="none" stroke="#1d5fa8" stroke-width="1.500"><path d="M1 4c0-3 5-4 6-1M8 5c0 3-5 4-6 1M7 0v3H5M2 9V6h2"/></svg></button>
            <button aria-label="Pause Drawing" class="ml-[34px]"><svg class="size-[8px]" viewBox="0 0 8 8" stroke="#1d4f9a" stroke-width="2"><path d="M2 0v8M6 0v8"/></svg></button>
            <button aria-label="Scroll Left" class="ml-[28px] -rotate-90"><svg class="h-4 w-5"><use href="#arr"/></svg></button>
            <button aria-label="Scroll Right" class="mr-14 ml-auto rotate-90"><svg class="h-4 w-5"><use href="#arr"/></svg></button>
          </div>
        </section>
      </div>

      <!-- attribute table -->
      <section class="mt-[7px]" aria-label="Table">
        <div class="flex h-[46px] items-center bg-linear-to-r from-[#bfcddc] via-[#d3e0ee] to-[#d6e3f0] px-1">
          <h2 class="flex-1 pt-[3px]">Table</h2>
          <button aria-label="Auto Hide" class="mr-[6px]"><svg class="size-[10px]"><use href="#pin"/></svg></button>
          <button aria-label="Close"><svg class="size-[10px]"><use href="#x"/></svg></button>
        </div>
        <div role="toolbar" aria-label="Table Tools" class="flex h-[26px] items-center bg-linear-to-b from-[#fcfcfc] to-[#efefef] pl-1 [&_button]:flex [&_button]:h-[22px] [&_button]:w-[22px] [&_button]:items-center [&_button]:justify-center [&_svg]:size-4 [&>b]:mx-[3px] [&>b]:border-x-3 [&>b]:border-t-3 [&>b]:border-x-transparent [&>b]:border-t-black [&>i]:mx-[2px] [&>i]:h-4 [&>i]:border-l [&>i]:border-[#bbb]">
          <button aria-label="Table Options"><svg><use href="#opts"/></svg></button><b></b><i></i><button aria-label="Related Tables"><svg><use href="#rel"/></svg></button><b></b><i></i><button aria-label="Select By Attributes"><svg><use href="#tse1"/></svg></button><button aria-label="Switch Selection"><svg><use href="#tse2"/></svg></button><button aria-label="Clear Selection"><svg><use href="#clr"/></svg></button><button aria-label="Zoom To Selected"><svg><use href="#lz"/></svg></button><button aria-label="Delete Selected"><svg><use href="#del"/></svg></button>
        </div>
        <div class="flex h-[46px] items-center bg-linear-to-r from-[#bfcddc] via-[#d3e0ee] to-[#d6e3f0] px-1">
          <h3 class="flex-1 pt-[3px]">ca_zips</h3>
          <button aria-label="Close"><svg class="size-[10px]"><use href="#x"/></svg></button>
        </div>
        <div class="mr-1 flex border-t-[5px] border-l-4 border-[#828282] bg-[#f0f0f0] font-['Liberation_Sans',sans-serif] text-[27px]">
          <div class="flex-1">
            <table class="w-[1777px] table-fixed border-separate border-spacing-0 bg-white [&_tbody_th]:border-r-2 [&_tbody_th]:border-b-2 [&_tbody_th]:border-[#333] [&_tbody_th]:bg-[#f0f0f0] [&_td]:h-[38px] [&_td]:overflow-hidden [&_td]:border-r [&_td]:border-b [&_td]:border-[#6d6d6d] [&_td]:px-1 [&_td]:pt-[2px] [&_td]:leading-[30px] [&_td]:whitespace-nowrap [&_thead_th]:h-10 [&_thead_th]:border-r-2 [&_thead_th]:border-b-2 [&_thead_th]:border-[#333] [&_thead_th]:bg-[#f0f0f0] [&_thead_th]:pt-[2px] [&_thead_th]:pl-1 [&_thead_th]:leading-[30px]">
              <colgroup><col class="w-9"><col class="w-[90px]"><col class="w-[127px]"><col class="w-[218px]"><col class="w-[636px]"><col class="w-[146px]"><col class="w-[90px]"><col class="w-[89px]"><col class="w-[182px]"><col class="w-[163px]"></colgroup>
              <thead><tr><th></th><th>FID</th><th>Shape</th><th>spatial_id</th><th>name</th><th></th><th></th><th></th><th></th><th></th></tr></thead>
              <tbody>
                <tr><th></th><td class="text-right">469</td><td>Polygon</td><td>92304</td><td>92304, Amboy, CA</td><td class="text-right">3</td><td class="text-right">92304</td><td class="text-right">92304</td><td class="text-right">0</td><td class="text-right">0</td></tr>
                <tr><th></th><td class="text-right">510</td><td>Polygon</td><td>92365</td><td>92365, Newberry Springs, CA</td><td class="text-right">2779</td><td class="text-right">92365</td><td class="text-right">92365</td><td class="text-right">0</td><td class="text-right">0</td></tr>
                <tr><th></th><td class="text-right">685</td><td>Polygon</td><td>93101</td><td>93101, Santa Barbara, CA</td><td class="text-right">32314</td><td class="text-right">93101</td><td class="text-right">93101</td><td class="text-right">0</td><td class="text-right">0</td></tr>
                <tr><th></th><td class="text-right">687</td><td>Polygon</td><td>93105</td><td>93105, Santa Barbara, CA</td><td class="text-right">25338</td><td class="text-right">93105</td><td class="text-right">93105</td><td class="text-right">0</td><td class="text-right">0</td></tr>
                <tr><th></th><td class="text-right">690</td><td>Polygon</td><td>93110</td><td>93110, Santa Barbara, CA</td><td class="text-right">17203</td><td class="text-right">93110</td><td class="text-right">93110</td><td class="text-right">0</td><td class="text-right">0</td></tr>
              </tbody>
            </table>
          </div>
          <div class="mr-px flex w-[41px] flex-col items-center py-[10px]">
            <button aria-label="Scroll Up" class="leading-none"><svg class="h-4 w-5"><use href="#arr"/></svg></button>
            <span class="mt-[16px] h-[42px] w-full bg-[#cdcdcd]"></span>
            <button aria-label="Scroll Down" class="mt-auto rotate-180 leading-none"><svg class="h-4 w-5"><use href="#arr"/></svg></button>
          </div>
        </div>
        <div class="mr-1 flex h-[54px] items-center border-b-2 border-[#e3e3e3] bg-linear-to-b from-white to-[#efefef] pl-[13px]">
          <button aria-label="First"><svg class="size-2" viewBox="0 0 8 8"><path d="M0 0h2v8H0zM7 0v8L3 4z"/></svg></button>
          <button aria-label="Previous" class="ml-[14px]"><svg class="size-2" viewBox="0 0 8 8"><path d="M5 0v8L1 4z"/></svg></button>
          <input aria-label="Record" value="0" class="ml-[8px] h-[46px] w-[58px] bg-white pt-[2px] pr-[3px] text-right">
          <button aria-label="Next" class="ml-[8px]"><svg class="size-2" viewBox="0 0 8 8"><path d="M3 0v8l4-4z"/></svg></button>
          <button aria-label="Last" class="ml-[14px]"><svg class="size-2" viewBox="0 0 8 8"><path d="M6 0h2v8H6zM1 0v8l4-4z"/></svg></button>
          <button aria-label="Show All Records" class="ml-[10px] border border-[#0078d7] bg-[#ddeefa] p-[2px]"><svg class="size-[18px]"><use href="#all"/></svg></button>
          <button aria-label="Show Selected Records" class="ml-[3px]"><svg class="size-4"><use href="#selr"/></svg></button>
          <span class="ml-[7px] border-l border-[#ccc] pt-[3px] pl-[6px]">(0 out of 916 Selected)</span>
        </div>
        <div class="h-[46px] pl-[3px]"><button class="h-[43px] rounded-b border border-t-0 border-[#aaa] bg-white px-1 pt-[2px]">ca_zips</button></div>
      </section>
    </div>

    <!-- docked strips -->
    <div class="flex w-[91px] justify-between pl-[2px]">
      <button class="mt-[2px] flex h-[133px] w-11 flex-col items-center gap-[5px] self-start rounded-l border border-r-0 border-[#999] bg-[#f0f0f0] pt-[5px] text-[#5a5a5a]"><svg class="size-4"><use href="#wcat"/></svg><span class="[writing-mode:vertical-rl]">Catalog</span></button>
      <div role="toolbar" aria-label="Editor" class="mt-[389px] flex w-10 flex-col items-center self-start bg-linear-to-r from-[#fcfcfc] to-[#f0f0f0] [&>i]:my-1 [&>i]:h-px [&>i]:w-8 [&>i]:bg-[#bbb] [&>svg]:my-[3px] [&>svg]:size-4 [&>svg]:fill-none [&>svg]:stroke-[#b5b5b5]">
        <span class="w-8 border-t border-dashed border-[#aaa]"></span>
        <button class="mt-3 [writing-mode:vertical-rl]">Editor</button>
        <b class="border-y-3 border-r-3 border-y-transparent border-r-black"></b>
        <i></i>
        <svg viewBox="0 0 16 16"><path d="M5 3l8 5-8 4z" fill="#b5b5b5"/></svg>
        <svg viewBox="0 0 16 16"><path d="M1 1l8 5-8 4z" fill="#b5b5b5"/><path d="M9 15l3-7 3 7M10 12h4"/></svg>
        <i></i>
        <svg viewBox="0 0 16 16"><path d="M2 14L14 2M1 12h3v3H1zM12 1h3v3h-3z"/></svg>
        <svg viewBox="0 0 16 16"><path d="M3 14C3 8 6 4 14 3M1 12h3v3H1zM5 6h3v3H5zM12 1h3v3h-3z"/></svg>
        <svg viewBox="0 0 16 16"><path d="M1 13L5 2h10v12h-3M4 11h6M7 8v6M13 1h2v3h-2z"/></svg>
        <svg viewBox="0 0 16 16"><path d="M8 0v16M0 8h16M3 3l10 10M13 3L3 13" stroke-dasharray="2 1"/><path d="M6.500 6.500h3v3h-3z" fill="#999"/></svg>
        <i></i>
        <svg viewBox="0 0 16 16"><path d="M2 2v12h12v-4zM2 2h12v8"/></svg>
        <svg viewBox="0 0 16 16"><path d="M2 2v12h4V6zM8 1v14M10 8h4v6h-4" stroke-width="1.500"/></svg>
        <svg viewBox="0 0 16 16"><path d="M1 5h14v6H1zM8 1v14M6 1h4M6 15h4"/></svg>
        <svg viewBox="0 0 16 16"><path d="M1 15L15 1M2 3l12 11" stroke-dasharray="3 1"/></svg>
        <svg viewBox="0 0 16 16"><path d="M3 8a5 5 0 1 1 7 5" stroke-width="2.500"/><path d="M13 9v6H7z" fill="#b5b5b5"/></svg>
        <i></i>
        <svg viewBox="0 0 16 16"><path d="M1 2h14v12H1zM3 5h4M3 8h4M3 11h4M9 5h4M9 8h4M9 11h4"/></svg>
        <svg viewBox="0 0 16 16"><path d="M1 2h14v12H1zM3 11l5-6 5 6"/></svg>
        <i></i>
        <svg viewBox="0 0 16 16"><path d="M1 2h11v12H1zM3 5h3M3 8h3M3 11h3M15 2l-7 8"/></svg>
        <span class="flex h-[10px] w-full items-center justify-end bg-linear-to-r from-[#eee] to-[#999] pr-1"><b class="border-y-3 border-l-4 border-y-transparent border-l-black"></b></span>
      </div>
    </div>
  </main>

  <footer class="flex h-[45px] items-center justify-end border-t border-white bg-[#f0f0f0] pt-[3px] pr-[166px] whitespace-pre">-14422346.787  4687780.841 Meters</footer>

  <!-- taskbar -->
  <div class="flex h-[76px] items-center bg-[linear-gradient(90deg,#0b0b0b_0%,#0c0b0a_10%,#201a13_22%,#2b2522_32%,#2a2523_50%,#1e1a18_60%,#2a2520_70%,#2a2523_78%,#1f1e20_83%,#272729_90%,#252527_100%)] text-[27px] text-white">
    <button aria-label="Start" class="ml-[25px]"><svg class="size-10" viewBox="0 0 40 40" fill="#fff"><path d="M0 5l16-2v16H0zM18 3l22-3v19H18zM0 21h16v15L0 34zM18 21h22v19l-22-3z"/></svg></button>
    <span class="ml-10 h-[60px] w-2 border-x-2 border-[#444]"></span>
    <div class="ml-[27px] flex h-full gap-[2px] [&_svg]:size-[38px] [&>button]:flex [&>button]:h-full [&>button]:w-[92px] [&>button]:flex-col [&>button]:items-center [&>button]:justify-between [&>button]:pt-[19px] [&>button>span]:h-[5px] [&>button>span]:w-[71px] [&>button>span]:bg-[#fdd5af]">
      <button aria-label="Chrome"><svg viewBox="0 0 38 38"><circle cx="19" cy="19" r="18" fill="#ffcd40"/><path d="M19 19L3.500 10A18 18 0 0 1 34.600 10H19z" fill="#db4437"/><path d="M3.500 10A18 18 0 0 0 18 37l9-14-8-4z" fill="#0f9d58"/><circle cx="19" cy="19" r="8.500" fill="#f1f1f1"/><circle cx="19" cy="19" r="6.800" fill="#4285f4"/></svg><span></span></button>
      <button aria-label="File Explorer"><svg viewBox="0 0 38 38"><path d="M1 3h15l2 3h19v27H1z" fill="#ffe694"/><path d="M1 3h15l2 3-3 3H1z" fill="#f9c33c"/><path d="M3 5h8v2H3z" fill="#fff"/><path d="M7 35V20h24v15h-6v-8H13v8z" fill="#32b1e8"/></svg><span></span></button>
      <button aria-label="Slack"><svg viewBox="0 0 38 38"><rect x="3" y="3" width="32" height="32" rx="2" fill="#fff"/><path d="M3 5l0 18 10-3 5-17H5z" fill="#6bc9a3"/><path d="M15 3h9l-3 8-10 4z" fill="#8ed2dc"/><path d="M23 3h12v16l-6 4-8-12z" fill="#e5b12c"/><path d="M18 35l-2-8 12-4 7 4v8z" fill="#d6184b"/><path d="M3 24l11-3 4 14H3z" fill="#3ea98d"/><path d="M12 11l15-3 2 19-16 4z" fill="#fff"/><text x="14" y="27" font-family="Lato" font-size="21" font-weight="bold" fill="#222">S</text></svg><span></span></button>
      <button aria-label="GitHub"><svg viewBox="0 0 38 38"><circle cx="19" cy="19" r="18" fill="#6b2a86" stroke="#ddd" stroke-width="1.500"/><path d="M9 9l5 3h10l5-3c1 3 1 5 0 7 3 7-1 11-6 12v9h-8v-5c-5 1-7-1-8-4 3 0 4 2 8 1v-1c-5-1-8-5-6-12-1-2-1-4 0-7z" fill="#ececec"/></svg><span></span></button>
      <button aria-label="Atom" class="bg-white/15"><svg viewBox="0 0 38 38"><circle cx="19" cy="19" r="17" fill="#49b675" stroke="#d5e8dc"/><g fill="none" stroke="#fff" stroke-width="1.500"><ellipse cx="19" cy="19" rx="4" ry="11" transform="rotate(10 19 19)"/><ellipse cx="19" cy="19" rx="4" ry="11" transform="rotate(70 19 19)"/><ellipse cx="19" cy="19" rx="4" ry="11" transform="rotate(130 19 19)"/></g><circle cx="19" cy="19" r="1.500" fill="#fff"/></svg><span class="w-full!"></span></button>
      <button aria-label="RStudio"><svg viewBox="0 0 38 38"><radialGradient id="rs" cx=".5" cy=".9" r=".9"><stop offset="0" stop-color="#5db8f5"/><stop offset="1" stop-color="#1646ae"/></radialGradient><circle cx="19" cy="19" r="18.500" fill="url(#rs)"/><ellipse cx="19" cy="9" rx="13" ry="7" fill="#fff" opacity=".35"/><text x="11" y="27" font-family="Liberation Serif" font-size="24" font-weight="bold" fill="#fff">R</text></svg><span></span></button>
      <button aria-label="ArcMap" class="bg-white/20"><svg><use href="#app"/></svg><span class="w-full!"></span></button>
      <button aria-label="Excel"><svg viewBox="0 0 38 38"><path d="M20 6h17v27H20z" fill="#fff" stroke="#207245" stroke-width="2"/><path d="M23 10h5M30 10h5M23 15h5M30 15h5M23 20h5M30 20h5M23 25h5M30 25h5M23 29h5M30 29h5" stroke="#207245" stroke-width="2"/><path d="M1 4l21-4v38L1 34z" fill="#207245"/><path d="M7 12l9 14M16 12L7 26" stroke="#fff" stroke-width="3"/></svg><span></span></button>
    </div>
    <div class="ml-auto flex h-full items-center">
      <span class="flex h-[50px] w-[123px] items-center justify-center border-6 border-white bg-[#169c4b] pt-px text-[30px]">100%</span><span class="h-6 w-[5px] bg-white"></span>
      <svg class="ml-[14px] h-[37px] w-[22px]" viewBox="0 0 22 37" fill="#fff"><path d="M4 0h5v10H4zM13 0h5v10h-5zM0 10h22v9c0 5-4 8-8 9v9H8v-9c-4-1-8-4-8-9z"/></svg>
      <svg class="ml-[38px] h-[18px] w-8" viewBox="0 0 32 18" fill="none" stroke="#fff" stroke-width="2"><path d="M1 17L16 2l15 15"/></svg>
      <svg class="ml-11 h-[34px] w-10" viewBox="0 0 40 34" fill="none" stroke="#fff" stroke-width="2"><path d="M9 2h30v24H5M5 33V14M1 3h8v10H1zM3 7h4M22 26v6M14 32h15"/></svg>
      <svg class="ml-10 h-[28px] w-10" viewBox="0 0 40 28"><path d="M7 27a8 8 0 0 1-2-14C5 8 9 6 11 6c3-8 15-8 18 0 4 1 5 4 5 7a8 8 0 0 1-2 14z" fill="#fff"/><path d="M20 7l7 8h-4v7h-6v-7h-4z" fill="#2a2726"/></svg>
      <svg class="ml-10 h-9 w-10" viewBox="0 0 40 36" fill="none" stroke="#fff" stroke-width="2"><path d="M1 12h6l7-7v26l-7-7H1zM19 12c3 4 3 9 0 13M25 8c5 6 5 14 0 20"/><path d="M31 3c8 9 8 21 0 30" stroke="#888"/></svg>
      <svg class="ml-[42px] h-8 w-9" viewBox="0 0 36 32" fill="#fff"><path d="M9 0l9 6-9 6-9-6zM27 0l9 6-9 6-9-6zM9 12l9 6-9 5-9-5zM27 12l9 6-9 5-9-5zM18 20l9 6-9 6-9-6z"/></svg>
      <span class="ml-[38px] pt-[3px]">ENG</span>
      <time class="ml-[35px] pt-[3px]">11:44 AM</time>
      <svg class="ml-[51px] size-[41px]" viewBox="0 0 41 41" fill="none" stroke="#fff" stroke-width="2"><path d="M40 22V1H1v33h15l5 6M37 23c5 8 1 16-8 16 5-3 8-8 8-16z"/></svg>
      <span class="mr-[10px] ml-[51px] h-full w-[2px] bg-[#777]"></span>
    </div>
  </div>
</div>

<!-- layer properties window -->
<section role="dialog" aria-label="Layer Properties" class="absolute top-[278px] left-[996px] w-[1706px] border-2 border-[#b98550] bg-[#f0f0f0] font-['Liberation_Sans',sans-serif] text-[27px] leading-7 shadow-[0_8px_34px_rgba(0,0,0,0.45)]">
  <div class="flex h-[70px] items-center justify-between bg-white pr-[31px] pl-[14px]">
    <h2 class="font-['Open_Sans',sans-serif] text-[27px]">Layer Properties</h2>
    <button aria-label="Close"><svg class="size-[21px]" viewBox="0 0 21 21" stroke="#000" stroke-width="2"><path d="M1 1l19 19M20 1L1 20"/></svg></button>
  </div>
  <div role="tablist" class="flex h-[63px] items-end pl-5 [&>button]:h-[42px] [&>button]:border-t [&>button]:border-l [&>button]:border-[#dadada] [&>button]:pt-[6px] [&>button]:pl-[15px] [&>button]:text-left [&>button]:whitespace-nowrap">
    <button role="tab" class="w-[125px]">General</button><button role="tab" class="w-[116px]">Source</button><button role="tab" class="w-[142px]">Selection</button><button role="tab" class="w-[117px]">Display</button><button role="tab" aria-selected="true" class="h-[47px]! w-[172px] bg-white pt-1! pl-[18px]!">Symbology</button><button role="tab" class="w-[99px] pl-[10px]!">Fields</button><button role="tab" class="w-[224px]">Definition Query</button><button role="tab" class="w-[110px]">Labels</button><button role="tab" class="w-[219px] pl-[20px]!">Joins &amp; Relates</button><button role="tab" class="w-[102px]">Time</button><button role="tab" class="w-[188px] border-r">HTML Popup</button>
  </div>
  <div class="ml-[15px] flex h-[917px] border-l border-[#dadada] bg-white pl-[6px]">
    <div class="w-[343px]">
      <h3 class="h-[41px] pt-[7px]">Show:</h3>
      <ul class="h-[484px] border border-[#828790] pt-[2px] pl-[7px] leading-[34px] font-bold">
        <li>Features</li><li>Categories</li>
        <li>Quantities
          <ul class="ml-[6px] font-normal [&>li]:flex [&>li]:items-center [&>li]:border-l [&>li]:border-dotted [&>li]:border-[#888] [&>li]:before:w-[9px] [&>li]:before:border-t [&>li]:before:border-dotted [&>li]:before:border-[#888]">
            <li><span class="bg-[#f0f0f0] px-[2px]">Graduated colors</span></li><li><span class="px-[2px]">Graduated symbols</span></li><li><span class="px-[2px]">Proportional symbols</span></li><li><span class="px-[2px]">Dot density</span></li>
          </ul>
        </li>
        <li>Charts</li><li>Multiple Attributes</li>
      </ul>
      <svg class="mt-3 h-[216px] w-[343px]" viewBox="70 112 597 484" preserveAspectRatio="none" shape-rendering="crispEdges" stroke="#000" stroke-width="4.500">
        <path d="M70 112h597v484H70z" fill="#a7c9f0" stroke="none"/>
        <path d="M270 165l15-30 15-23h85l-25 20-30 28-50 14z" fill="#fc6"/><path d="M258 148l25-36h20l-10 25-20 28-15-2z" fill="#ff9"/>
        <path d="M430 138l5-22 12-2-2 20-12 8zM458 155l20-2 6 10-18 2zM490 112h30l6 20-15 15-6-25zM540 120l20-8 12 10-12 24-14 24z" fill="#fc6"/><path d="M560 112h110v12l-50 4-30-6z"/>
        <path d="M595 130l25 0 50-16v60l-30 2-18-10-15 8-14-18z" fill="#fc3"/><path d="M547 182h22v5h-22zM627 188h14v6h-14z"/>
        <path d="M305 190l-45 5-40 25-14 36-45 24 45 2 10-18 70-28 22-20z" fill="#fc6"/>
        <path d="M310 188l55-22 60-2-14 32-22 10v60l-15 34 14 32-86 46-42-35-50-62 10-18 60-22 24-14z" fill="#930"/>
        <path d="M412 168l25-4-12 32-8 22-16 24-4-32-8-6 20-10z" fill="#ff9"/>
        <path d="M398 240l28-26 28 8 8 16 22 6 24-28 28 2 2 30-20 100-10 20-30-10-50-28-40 4-14-32 14-22z" fill="#c93"/>
        <path d="M540 232l60 8 28-4 4 24-14 10 8 78H518l10-70z" fill="#fc3"/>
        <path d="M632 232l20-24 15-10v50l-28 12z" fill="#ff9"/><path d="M634 262l33-18v142l-20-54z" fill="#930"/>
        <path d="M160 278h50v18h-44l-20 40-12 16h-28l30-50z" fill="#fc6"/>
        <path d="M168 298h42l2 12-4 110-72 6-32-20 2-54h30z" fill="#fc3"/>
        <path d="M214 310l18 0 68 68-2 40-50 14-50 32-20 20-44-20 6-38 66-4z" fill="#c93"/>
        <path d="M304 378l84-44 34 4-6 70-30 40-50 6-34-6-20 14-14-30 30-12z" fill="#c93"/>
        <path d="M422 334l30 4 50 32-4 30-26 50v30l-30 30-38 4-18-54 4-50 24-10z" fill="#c93"/>
        <path d="M518 348h110l8 50-26 60-32 60 18 32-60 16-44-60-20-50 22-42 8-48z" fill="#930"/>
        <path d="M636 402l32 48v110l-40 10-50-50 32-60z" fill="#c93"/>
        <path d="M104 404l28 24 4 34-36-6-18-24zM86 460l30 4 50 4 4 86-26-10-20-44z" fill="#fc6"/><path d="M116 500l14-6 38 62-30-14-20-24zM86 456l28 0 0 12-20 2z" fill="#ff9"/>
        <path d="M198 474l20-26 30-14 20 36-30 12-36 4zM168 486l28 2 22-4 0 62-50 4zM218 478h30v64h-30z" fill="#fc6"/>
        <path d="M250 480l34-8-14 60-20 2z" fill="#ff9"/>
        <path d="M290 450l96 0 10 28-16 16-10 32-30 10-14 20-26-8-30-18z" fill="#fc3"/><path d="M380 494l10 30 8 60-60 4-8-50 34-10z" fill="#fc6"/>
        <path d="M390 522l50-14 36-26 34 66-60 4-50 20z" fill="#fc3"/><path d="M428 556l80-8 40 20 0 30H420z" fill="#930"/><path d="M338 588l40-10 40-10 2 30h-82zM548 566l36 0 6 30h-38z" fill="#fc6"/><path d="M584 556l44 14 22-8v36h-60z" fill="#fc3"/><path d="M650 562h18v36h-18z" fill="#fc3"/>
      </svg>
    </div>

    <div class="ml-[5px] w-[1140px] pt-[18px] [&_fieldset]:h-[166px] [&_fieldset]:border [&_fieldset]:border-[#dcdcdc] [&_legend]:ml-[6px] [&_legend]:px-[2px] [&_legend]:pt-[2px] [&_legend]:leading-[30px] [&_select]:h-[39px] [&_select]:w-full [&_select]:appearance-none [&_select]:border [&_select]:border-[#777] [&_select]:bg-white [&_select]:pl-1">
      <div class="flex justify-end gap-[10px] pr-[5px]">
        <p class="h-[53px] w-[951px] border-t border-l border-[#999] pl-px leading-[56px] font-bold">Draw quantities using color to show values.</p>
        <button class="h-[52px] w-[158px] border border-[#adadad] bg-[#e1e1e1] pt-[2px]">Import...</button>
      </div>
      <div class="mt-2 flex gap-6">
        <fieldset class="w-[636px]"><legend>Fields</legend>
          <div class="grid grid-cols-[188px_408px] items-end gap-y-[19px] pt-2 pl-[19px]">
            <label for="val">Value:</label><div class="relative"><select id="val"><option>totkbtu</option></select><svg class="pointer-events-none absolute top-[13px] right-3 h-3 w-[18px]"><use href="#chev"/></svg></div>
            <label for="norm" class="h-6">Normalization:</label><div class="relative"><select id="norm"><option>none</option></select><svg class="pointer-events-none absolute top-[13px] right-3 h-3 w-[18px]"><use href="#chev"/></svg></div>
          </div>
        </fieldset>
        <fieldset class="w-[480px]"><legend>Classification</legend>
          <p class="pt-4 pl-[98px]">Natural Breaks (Jenks)</p>
          <div class="mt-[15px] flex items-center pl-[23px]">
            <label for="cls" class="w-[120px] pt-[2px]">Classes:</label><div class="relative mb-1 w-[108px]"><select id="cls"><option>5</option></select><svg class="pointer-events-none absolute top-[13px] right-3 h-3 w-[18px]"><use href="#chev"/></svg></div>
            <button class="ml-[37px] h-[52px] w-[166px] border-2 border-[#0078d7] bg-[#e1e1e1] pt-[2px]">Classify...</button>
          </div>
        </fieldset>
      </div>
      <div class="mt-[17px] flex items-start pl-[9px]">
        <span id="ramp" class="w-[199px] pt-[14px]">Color Ramp:</span>
        <button aria-labelledby="ramp" aria-haspopup="listbox" class="flex h-[29px] w-[408px] items-center justify-between border border-[#777] bg-white pr-3 pl-[3px]"><span class="h-5 w-[357px] bg-linear-to-r from-[#ffc8c8] via-[#fa7357] to-[#dc0000]"></span><svg class="h-3 w-[18px]"><use href="#chev"/></svg></button>
      </div>
      <div class="mt-5 h-[368px] border border-[#828790] pl-[6px]">
        <table class="w-[1088px] table-fixed border-separate border-spacing-0 text-left [&_td]:h-[35px] [&_td]:whitespace-nowrap [&_td>span]:block [&_td>span]:h-[34px] [&_td>span]:w-[47px] [&_td>span]:border [&_td>span]:border-[#6e6e6e] [&_th]:h-[43px] [&_th]:border-r [&_th]:border-[#e5e5e5] [&_th]:pt-[2px] [&_th]:font-normal">
          <colgroup><col class="w-[46px]"><col class="w-[520px]"><col class="w-[522px]"></colgroup>
          <thead><tr><th class="pl-px">S...</th><th class="pl-[5px]">Range</th><th class="pl-[6px]">Label</th></tr></thead>
          <tbody>
            <tr><td><span class="bg-[#ffcccc]"></span></td><td class="pl-[2px]">0 - 150430142</td><td class="pl-[3px]">0 - 150,000,000</td></tr>
            <tr><td><span class="bg-[#ff9f8f]"></span></td><td class="pl-[2px]">150430143 - 401258900</td><td class="pl-[3px]">160,000,000 - 400,000,000</td></tr>
            <tr><td><span class="bg-[#fb745b]"></span></td><td class="pl-[2px]">401258901 - 687243855</td><td class="pl-[3px]">410,000,000 - 690,000,000</td></tr>
            <tr><td><span class="bg-[#f0442d]"></span></td><td class="pl-[2px]">687243856 - 1039382445</td><td class="pl-[3px]">700,000,000 - 1,000,000,000</td></tr>
            <tr><td><span class="bg-[#dc0000]"></span></td><td class="pl-[2px]">1039382446 - 1782931842</td><td class="pl-[3px]">1,100,000,000 - 1,800,000,000</td></tr>
          </tbody>
        </table>
      </div>
      <div class="mt-1 flex items-center justify-between">
        <label class="flex items-center gap-[7px]"><input type="checkbox" class="size-8 appearance-none border-2 border-[#333] bg-white">Show class ranges using feature values</label>
        <button class="relative h-[53px] w-[219px] border border-[#adadad] bg-[#e1e1e1] pt-[2px] pr-[6px]">Advance<u>d</u><b class="absolute top-6 right-1 border-x-3 border-t-3 border-x-transparent border-t-black"></b></button>
      </div>
    </div>
  </div>
  <div class="flex h-[75px] justify-end gap-[9px] pt-[17px] pr-[7px] [&>button]:h-[52px] [&>button]:w-[198px] [&>button]:border [&>button]:border-[#adadad] [&>button]:bg-[#e1e1e1] [&>button]:pt-[2px]">
    <button>OK</button><button>Cancel</button><button>Apply</button>
  </div>
</section>
</body>
</html>
